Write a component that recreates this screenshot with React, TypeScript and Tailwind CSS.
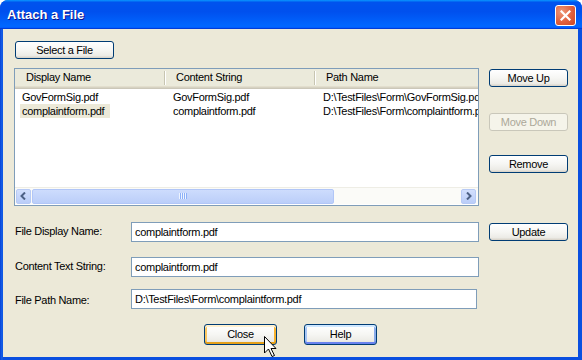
import React from "react";

const btnBase =
  "flex items-center justify-center rounded-[3px] border text-[11px] leading-none tracking-[-0.3px]";
const btnNormal =
  "border-[#003C74] bg-[linear-gradient(to_bottom,#FFFFFF_0%,#F6F6F3_50%,#ECEBE6_85%,#D6D0C5_100%)] text-black";
const btnDisabled = "border-[#C9C7BA] bg-[#F5F4EA] text-[#ACA899]";

function XPButton({
  children,
  className = "",
  disabled = false,
}: {
  children: React.ReactNode;
  className?: string;
  disabled?: boolean;
}) {
  return (
    <div className={`${btnBase} ${disabled ? btnDisabled : btnNormal} ${className}`}>
      {children}
    </div>
  );
}

function TextBox({ value, className = "" }: { value: string; className?: string }) {
  return (
    <div
      className={`flex h-[20px] items-center overflow-hidden whitespace-nowrap border border-[#7F9DB9] bg-white pl-[3px] ${className}`}
    >
      {value}
    </div>
  );
}

function Chevron({ dir }: { dir: "left" | "right" }) {
  return (
    <svg width="7" height="8" viewBox="0 0 7 8">
      {dir === "left" ? (
        <path d="M5 0.5 L1.5 4 L5 7.5" stroke="#4D6185" strokeWidth="2" fill="none" />
      ) : (
        <path d="M2 0.5 L5.5 4 L2 7.5" stroke="#4D6185" strokeWidth="2" fill="none" />
      )}
    </svg>
  );
}

const scrollBtn =
  "flex h-[15px] w-[15px] items-center justify-center rounded-[2px] border border-[#B7CAF5] bg-[linear-gradient(to_bottom,#D2DFFD,#BACDF8)]";

function ListView() {
  const rows = [
    { name: "GovFormSig.pdf", content: "GovFormSig.pdf", path: "D:\\TestFiles\\Form\\GovFormSig.pdf" },
    { name: "complaintform.pdf", content: "complaintform.pdf", path: "D:\\TestFiles\\Form\\complaintform.pdf", selected: true },
  ];

  return (
    <div className="flex h-[138px] w-[465px] flex-col overflow-hidden border border-[#7F9DB9] bg-white">
      {/* header */}
      <div className="flex h-[20px] shrink-0 items-center bg-[linear-gradient(to_bottom,#EBEADB_0px,#EBEADB_17px,#E2DECD_17px,#E2DECD_18px,#D6D2C2_18px,#D6D2C2_19px,#CBC7B8_19px)] pb-[3px]">
        <div className="w-[149px] pl-[11px]">Display Name</div>
        <div className="h-[14px] w-[2px] border-l border-[#C7C5B2] bg-white" />
        <div className="w-[148px] pl-[10px]">Content String</div>
        <div className="h-[14px] w-[2px] border-l border-[#C7C5B2] bg-white" />
        <div className="pl-[10px]">Path Name</div>
      </div>

      {/* rows */}
      <div className="flex-1 pt-[1px]">
        {rows.map((r) => (
          <div key={r.name} className="flex h-[14px] items-center whitespace-nowrap">
            <div className="w-[150px] pl-[5px]">
              <span className={`inline-block pl-[2px] pr-[6px] leading-[14px] ${r.selected ? "bg-[#ECE9D8]" : ""}`}>
                {r.name}
              </span>
            </div>
            <div className="w-[150px] pl-[8px]">{r.content}</div>
            <div className="flex-1 overflow-hidden pl-[8px]">{r.path}</div>
          </div>
        ))}
      </div>

      {/* horizontal scrollbar */}
      <div className="mb-[1px] flex h-[17px] shrink-0 items-center border-t border-[#EEEDE5] bg-[#FBFBF8] px-[1px]">
        <div className={scrollBtn}>
          <Chevron dir="left" />
        </div>
        <div className="ml-[1px] flex h-[15px] w-[302px] items-center justify-center rounded-[2px] border border-[#B1C6F7] bg-[linear-gradient(to_bottom,#CDDCFD,#BBCEF9)]">
          <svg width="8" height="6" viewBox="0 0 8 6">
            {[0, 2, 4, 6].map((x) => (
              <g key={x}>
                <rect x={x} y="0" width="1" height="6" fill="#EEF4FE" />
                <rect x={x + 1} y="0" width="1" height="6" fill="#8CB0F8" />
              </g>
            ))}
          </svg>
        </div>
        <div className="flex-1" />
        <div className={`${scrollBtn} mr-[1px]`}>
          <Chevron dir="right" />
        </div>
      </div>
    </div>
  );
}

export default function App() {
  return (
    <div className="relative h-[360px] w-[582px] bg-white font-['Liberation_Sans',Arial,sans-serif] text-[11px] tracking-[-0.3px] text-black">
      <div className="flex h-full flex-col overflow-hidden rounded-t-[8px] bg-[linear-gradient(to_right,#0842D6,#1661E8_2px,#0A4FE0_3px)]">
        {/* Title bar */}
        <div className="flex h-[29px] shrink-0 items-center bg-[linear-gradient(to_bottom,#0997FF,#0053EE_8%,#0050EE_40%,#0066FF_88%,#0066FF_93%,#005BFF_95%,#003DD7_96%,#003DD7)] pl-[7px] pr-[6px]">
          <span className="text-[13px] font-bold tracking-normal text-white [text-shadow:1px_1px_0_#0F1089]">
            Attach a File
          </span>
          <div className="ml-auto mt-[2px] flex h-[21px] w-[21px] items-center justify-center rounded-[3px] border border-white bg-[radial-gradient(circle_at_30%_30%,#EE9878,#E0603E_55%,#CC4622)]">
            <svg width="11" height="11" viewBox="0 0 11 11">
              <path d="M1.5 1.5 L9.5 9.5 M9.5 1.5 L1.5 9.5" stroke="white" strokeWidth="2.2" strokeLinecap="square" />
            </svg>
          </div>
        </div>

        {/* Body */}
        <div className="mb-[3px] ml-[3px] mr-[4px] flex flex-1 flex-col bg-[#ECE9D8] pl-[11px] pt-[12px]">
          <div className="flex">
            <XPButton className="ml-[1px] h-[18px] w-[99px]">Select a File</XPButton>
          </div>

          <div className="mt-[9px] flex">
            <ListView />
            <div className="ml-[10px] flex flex-col pt-[1px]">
              <XPButton className="h-[18px] w-[79px]">Move Up</XPButton>
              <XPButton disabled className="mt-[26px] h-[18px] w-[79px]">
                Move Down
              </XPButton>
              <XPButton className="mt-[24px] h-[18px] w-[79px]">Remove</XPButton>
            </div>
          </div>

          {/* Form rows */}
          <div className="mt-[16px] flex items-start">
            <div className="w-[117px] pl-[1px] pt-[1px]">File Display Name:</div>
            <TextBox value="complaintform.pdf" className="w-[348px]" />
            <XPButton className="ml-[10px] mt-[1px] h-[18px] w-[79px]">Update</XPButton>
          </div>
          <div className="mt-[15px] flex items-start">
            <div className="w-[117px] pl-[1px] pt-[1px]">Content Text String:</div>
            <TextBox value="complaintform.pdf" className="w-[348px]" />
          </div>
          <div className="mt-[12px] flex items-start">
            <div className="w-[117px] pl-[1px] pt-[3px]">File Path Name:</div>
            <TextBox value="D:\TestFiles\Form\complaintform.pdf" className="w-[346px]" />
          </div>

          {/* Bottom buttons */}
          <div className="ml-[190px] mt-[15px] flex">
            <XPButton className="h-[21px] w-[73px] shadow-[inset_0_2px_0_#FFF0CF,inset_0_-2px_0_#E5A01A,inset_2px_0_0_#FBC761,inset_-2px_0_0_#F8B330]">
              Close
            </XPButton>
            <XPButton className="ml-[27px] h-[21px] w-[73px] shadow-[inset_0_2px_0_#CEE7FF,inset_0_-2px_0_#6982EE,inset_2px_0_0_#A8C6F4,inset_-2px_0_0_#8AACEA]">
              Help
            </XPButton>
          </div>
        </div>
      </div>

      {/* Mouse pointer over Close */}
      <svg
        className="absolute left-[263px] top-[335px]"
        width="14"
        height="23"
        viewBox="0 0 14 23"
      >
        <path
          d="M1.5 1.5 V18 L5.5 14 L9 21.5 L11.5 20.5 L8 13.5 H13 Z"
          fill="white"
          stroke="black"
          strokeWidth="1"
          strokeLinejoin="miter"
        />
      </svg>
    </div>
  );
}
